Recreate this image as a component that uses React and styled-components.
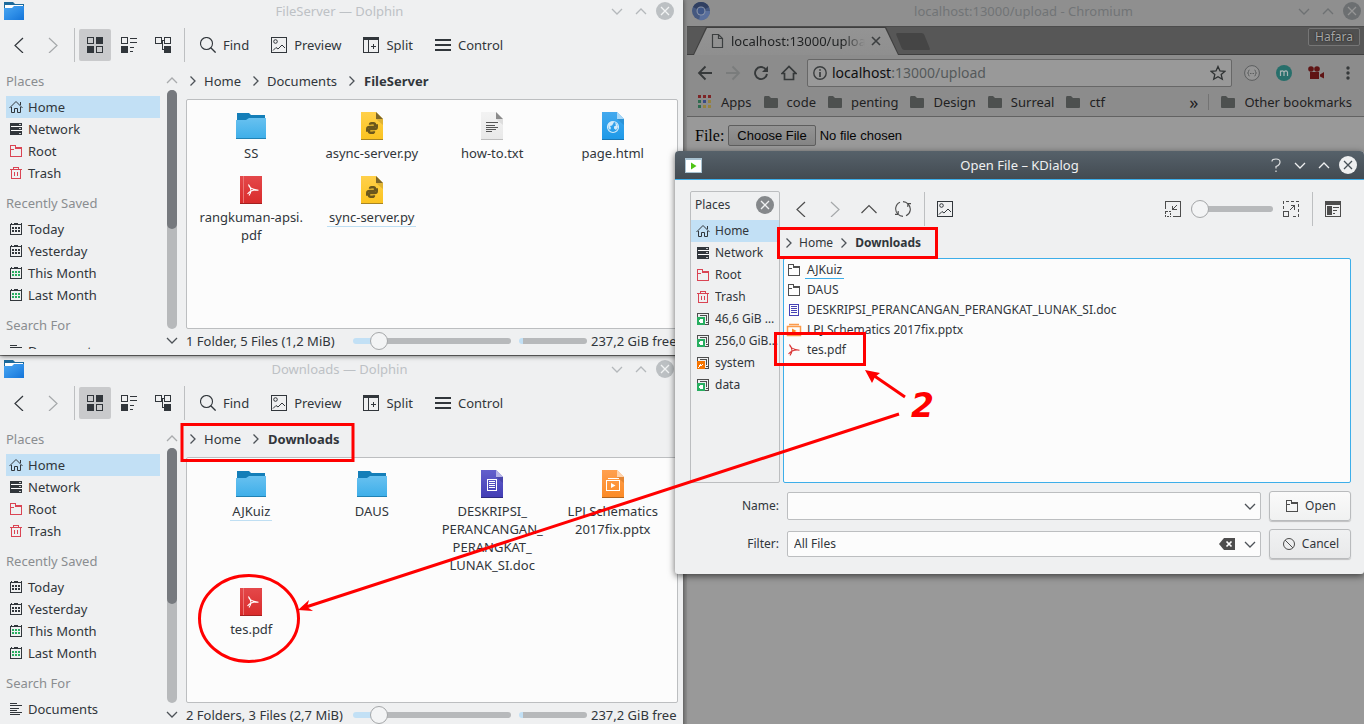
import React from "react";
import styled, { createGlobalStyle, css } from "styled-components";

const Global = createGlobalStyle`
  * { box-sizing: border-box; }
  html, body { margin: 0; height: 100%; }
  #root { height: 100%; }
  body { font: 13px/18px "Noto Sans", "Liberation Sans", sans-serif; color: #31363b; }
  button, input, select { font: inherit; color: inherit; }
  button { border: 0; background: none; padding: 0; }
  a { color: inherit; text-decoration: none; }
  ul { list-style: none; margin: 0; padding: 0; }
  svg { display: block; flex: none; }
`;

/* ---------- icons ---------- */
const Svg = ({ s = 16, children, ...p }) => (
  <svg width={s} height={s} viewBox={`0 0 ${s} ${s}`} fill="none" aria-hidden="true" {...p}>{children}</svg>
);

const chevrons = {
  left: "M12 1L4 8.500L12 16",
  right: "M4 1L12 8.500L4 16",
};
const Nav = ({ dir, color = "#31363b" }) => (
  <Svg><path d={chevrons[dir]} stroke={color} strokeWidth="1.2" /></Svg>
);
const Chevron = ({ dir = "down", color = "#4d5257" }) => {
  const d = { down: "M1 4L6 9L11 4", up: "M1 9L6 4L11 9", right: "M3.500 1.500L8 6L3.500 10.500" }[dir];
  return <Svg s={12}><path d={d} stroke={color} strokeWidth="1.3" /></Svg>;
};
const WideUp = () => <Svg><path d="M.5 12L8 4.500L15.500 12" stroke="#4d4d4d" strokeWidth="1.2" /></Svg>;
const CloseDisc = ({ bg, fg }) => (
  <Svg s={18}><circle cx="9" cy="9" r="9" fill={bg} /><path d="M5 5L13 13M13 5L5 13" stroke={fg} strokeWidth="1.3" /></Svg>
);

const GridIcon = () => (
  <Svg shapeRendering="crispEdges">
    <rect x=".5" y=".5" width="6" height="6" stroke="#31363b" /><rect x="9" width="7" height="7" fill="#31363b" />
    <rect y="9" width="7" height="7" fill="#31363b" /><rect x="9.500" y="9.500" width="6" height="6" stroke="#31363b" />
  </Svg>
);
const DetailsIcon = () => (
  <Svg shapeRendering="crispEdges">
    <rect x=".5" y=".5" width="6" height="6" stroke="#31363b" /><rect y="9" width="7" height="7" fill="#31363b" />
    <path d="M9 1.500H16M9 5.500H16M9 10.500H13M9 14.500H12" stroke="#31363b" />
  </Svg>
);
const TreeIcon = () => (
  <Svg shapeRendering="crispEdges">
    <rect x=".5" y=".5" width="6" height="6" stroke="#31363b" /><rect x="9.500" y=".5" width="6" height="6" stroke="#31363b" />
    <rect x="9" y="9" width="7" height="7" fill="#31363b" /><path d="M7 3.500H9M7.500 4V12.500H9" stroke="#31363b" />
  </Svg>
);
const FindIcon = () => (
  <Svg><circle cx="6.500" cy="6.500" r="6" stroke="#31363b" strokeWidth="1.1" /><path d="M10.800 10.800L15.600 15.600" stroke="#31363b" strokeWidth="1.3" /></Svg>
);
const PreviewIcon = () => (
  <Svg>
    <rect x=".5" y=".5" width="15" height="15" stroke="#31363b" /><circle cx="4.500" cy="4.500" r="1.800" stroke="#31363b" />
    <path d="M2 13.500L5 10.500L7 12L11 8L14 11" stroke="#31363b" />
  </Svg>
);
const SplitIcon = () => (
  <Svg shapeRendering="crispEdges">
    <rect x=".5" y=".5" width="15" height="15" stroke="#31363b" /><rect width="16" height="3" fill="#31363b" />
    <path d="M5.500 3V16M8 9.500H13M10.500 7V12" stroke="#31363b" />
  </Svg>
);
const MenuIcon = () => <Svg shapeRendering="crispEdges"><path d="M0 3H16M0 8H16M0 13H16" stroke="#31363b" strokeWidth="2" /></Svg>;
const RefreshIcon = () => (
  <Svg>
    <path d="M5 1.200A7.300 7.300 0 0 0 3 13.200M11 14.800A7.300 7.300 0 0 0 13 2.800M3.200 10V13.400H0M12.800 6V2.600H16M8 .6A7.300 7.300 0 0 1 13 2.800M8 15.400A7.300 7.300 0 0 1 3 13.200" stroke="#4d4d4d" strokeWidth="1.1" />
  </Svg>
);
const ZoomOutIcon = () => (
  <Svg shapeRendering="crispEdges">
    <path d="M.5 8V.5H15.500V15.500H8" stroke="#4d4d4d" /><path d="M.5 10.500H5.500V15.500H.5Z" stroke="#4d4d4d" strokeDasharray="2 1" />
    <path d="M12 4L8 8M7.500 4.500V8.500H11.500" stroke="#4d4d4d" />
  </Svg>
);
const ZoomInIcon = () => (
  <Svg shapeRendering="crispEdges">
    <path d="M.5 8V.5H15.500V15.500H8" stroke="#4d4d4d" strokeDasharray="3 2" /><rect x=".5" y="10.500" width="5" height="5" stroke="#4d4d4d" />
    <path d="M7 9L11 5M7.500 4.500H11.500V8.500" stroke="#4d4d4d" />
  </Svg>
);
const PanelIcon = () => (
  <Svg shapeRendering="crispEdges">
    <rect x=".5" y=".5" width="15" height="15" stroke="#4d4d4d" /><rect width="16" height="4" fill="#4d4d4d" />
    <rect x="2" y="5" width="5" height="9" fill="#4d4d4d" /><path d="M8 6.500H14M8 9.500H12M8 12.500H10" stroke="#4d4d4d" />
  </Svg>
);

const Calendar = ({ c }) => (
  <Svg shapeRendering="crispEdges">
    <path d="M2.500 3V13.500H13.500V3M2 3.500H14M3 2V4M13 2V4" stroke="#31363b" /><rect x="6" y="2" width="4" height="2" fill="#31363b" />
    <path d="M4 7H12M4 10H12" stroke={c} strokeWidth="2" strokeDasharray="2 1" />
  </Svg>
);
const Disk = ({ c, children }) => (
  <Svg shapeRendering="crispEdges">
    <rect x="2.500" y="2.500" width="11" height="11" stroke="#4d4d4d" /><path d="M5 4.500H11.500V10" stroke="#4d4d4d" />
    <path d="M7 6.500H10M11 11.500H13" stroke="#4d4d4d" />
    <rect x="2" y="6" width="8" height="8" fill={c} />{children}
  </Svg>
);
const Mounted = () => <Disk c="#27ae60"><path d="M3 10L6 7V8H8V12H6V13Z" fill="#fff" /></Disk>;
const FolderOutline = ({ c = "#4d4d4d" }) => (
  <Svg shapeRendering="crispEdges">
    <path d="M2.500 13.500V2.500H7.500V4.500H13.500V13.500ZM3 6.500H6" stroke={c} /><path d="M6 6L8 4H14V6Z" fill={c} />
  </Svg>
);
const placeIcons = {
  home: <Svg><path d="M1.500 9L8 2.500L14.500 9M3.500 8V13.500H6.500V9.500H9.500V13.500H12.500V8M12.500 3V6" stroke="#31363b" /></Svg>,
  network: (
    <Svg shapeRendering="crispEdges">
      <rect x="2" y="2" width="12" height="12" fill="#31363b" /><path d="M3 5.500H14M3 9.500H14" stroke="#fcfcfc" />
      <path d="M11 3.500H13M11 7.500H13M11 12.500H13" stroke="#c8cacc" />
    </Svg>
  ),
  root: <FolderOutline c="#da4453" />,
  trash: (
    <Svg shapeRendering="crispEdges"><path d="M2 4.500H14M3.500 5V13.500H12.500V5M5.500 4V2.500H10.500V4M6.500 7V11M9.500 7V11" stroke="#da4453" /></Svg>
  ),
  day: <Calendar c="#31363b" />,
  month: <Calendar c="#27ae60" />,
  docs: <Svg shapeRendering="crispEdges"><path d="M2 2.500H9M2 4.500H14M2 7.500H11M2 9.500H9M2 11.500H14M2 13.500H12" stroke="#31363b" /></Svg>,
  disk: <Mounted />,
  system: <Disk c="#f67400"><path d="M3 13L5 9L6 10L9 7L7 11L6 10.500Z" fill="#fff" /></Disk>,
};

const WindowFolder = () => (
  <Svg s={20}>
    <defs><linearGradient id="wf" x1="0" y1="0" x2="1" y2="1"><stop offset="0" stopColor="#4aa6f0" /><stop offset=".5" stopColor="#2f8fe8" /><stop offset="1" stopColor="#1474d8" /></linearGradient></defs>
    <path d="M0 1H9L11 3H20V7H0Z" fill="#1c6a9c" /><rect x="1" y="4" width="18" height="4" fill="#fff" />
    <path d="M0 7H8L10 5H20V19H0Z" fill="url(#wf)" />
  </Svg>
);

const Acrobat = ({ c }) => (
  <path d="M-4.500-5.500C-4-2-1-.5 5.500 .2C1-.5-3 1-5.500 4M-4.500-5.500C-1.500-2-1.500 2-4 5.500" stroke={c} strokeWidth="1.1" fill="none" />
);
const Paper = ({ id, from, to, fold, edge, children }) => (
  <Svg s={32}>
    <defs><linearGradient id={id} x2="0" y2="1"><stop stopColor={from} /><stop offset="1" stopColor={to} /></linearGradient></defs>
    <path d="M5 2H20L27 9V30H5Z" fill={`url(#${id})`} /><path d="M20 9H27V15Z" fill={edge} opacity=".35" />
    <path d="M20 2L27 9H20Z" fill={fold} /><path d="M5 29.500H27" stroke={edge} />
    {children}
  </Svg>
);
const fileIcons = {
  folder: (
    <Svg s={32}>
      <defs><linearGradient id="fo" x2="0" y2="1"><stop stopColor="#68c1f0" /><stop offset="1" stopColor="#3daee9" /></linearGradient></defs>
      <path d="M2 3H14L16 5H30V12H2Z" fill="#147eb8" /><path d="M1 10H11L14 8H31V29H1Z" fill="url(#fo)" /><path d="M1 28.500H31" stroke="#2182b4" />
    </Svg>
  ),
  python: (
    <Paper id="py" from="#ffd04a" to="#fbc31f" fold="#7d6628" edge="#a88523">
      <g transform="translate(10 12)" stroke="#6b571c" strokeWidth="2.400">
        <path d="M4 2.800Q4 1.200 5.500 1.200H7.500Q9 1.200 9 2.700V3.500Q9 5 7.500 5H3.500Q1.200 5 1.200 7V8.500H2.500" />
        <path d="M8 9.200Q8 10.800 6.500 10.800H4.500Q3 10.800 3 9.300V8.500Q3 7 4.500 7H8.500Q10.800 7 10.800 5V3.500H9.500" />
      </g>
    </Paper>
  ),
  text: (
    <Paper id="tx" from="#f3f3f3" to="#e8e8e8" fold="#8b8b8b" edge="#bdbdbd">
      <path d="M10 12.500H22M10 15.500H19M10 17.500H22M10 19.500H20M10 21.500H16" stroke="#555" shapeRendering="crispEdges" />
    </Paper>
  ),
  html: (
    <Paper id="ht" from="#43a9ee" to="#1d99e8" fold="#a9d8f7" edge="#1a76b3">
      <circle cx="16" cy="17" r="5.500" stroke="#d3ebfa" strokeWidth="1.2" />
      <path d="M11 14L14 11.500L17 12L16 14L15 15.500L13 16L14 18L13 20L11.500 18ZM18 13L20 14L21 17L19 20L17 18.500L17 16.500L19 15.500Z" fill="#d3ebfa" />
    </Paper>
  ),
  pdf: (
    <Svg s={32}>
      <defs><linearGradient id="pd" x2="0" y2="1"><stop stopColor="#e4484a" /><stop offset="1" stopColor="#d92b2b" /></linearGradient></defs>
      <rect x="5" y="2" width="22" height="28" fill="url(#pd)" /><path d="M8.500 2V30" stroke="#ec7373" /><path d="M5 29.500H27" stroke="#a32020" />
      <g transform="translate(18 16)"><Acrobat c="#fff" /></g>
    </Svg>
  ),
  doc: (
    <Paper id="dc" from="#6360cc" to="#413cb4" fold="#b5b3e6" edge="#2d2a80">
      <path d="M11.500 11.500H20.500V22.500H11.500Z M13 13.500H19M13 15.500H19M13 17.500H19M13 19.500H19" stroke="#fff" shapeRendering="crispEdges" />
    </Paper>
  ),
  pptx: (
    <Paper id="pp" from="#ffa04f" to="#fb8a25" fold="#ffd3ad" edge="#b3641c">
      <path d="M9.500 12.500H22.500V22.500H9.500ZM10.500 10.500H21.500" stroke="#fff" shapeRendering="crispEdges" /><path d="M14 15L18.500 17.500L14 20Z" fill="#fff" />
    </Paper>
  ),
};

/* ---------- desktop and windows ---------- */
const Desktop = styled.main`
  position: relative;
  width: 100%;
  height: 100%;
  min-height: 724px;
  overflow: hidden;
  background: #979797;
`;
const Dolphin = styled.section`
  position: absolute;
  left: 0;
  top: ${(p) => p.$top}px;
  width: 683px;
  height: ${(p) => p.$height}px;
  z-index: ${(p) => p.$z};
  display: flex;
  flex-direction: column;
  background: #eff0f1;
  box-shadow: 0 1px 5px rgba(0, 0, 0, 0.6);
`;
const TitleBar = styled.header`
  display: grid;
  grid-template-columns: 72px 1fr 76px;
  align-items: center;
  height: 26px;
  color: #bdc1c5;
  text-align: center;
  > svg { margin-left: 4px; }
`;
const WindowButtons = styled.div`
  display: flex;
  justify-content: flex-end;
  align-items: center;
  padding-right: ${(p) => p.$right}px;
  gap: 6px;
  button { width: 18px; display: grid; place-items: center; }
`;
const ToolBar = styled.div`
  display: flex;
  align-items: center;
  gap: 2px;
  height: 42px;
  padding-left: 3px;
`;
const ToolButton = styled.button`
  display: flex;
  align-items: center;
  justify-content: center;
  gap: 7px;
  height: 32px;
  border-radius: 2px;
  ${(p) => (p.$text ? "padding: 0 9px 0 11px;" : "width: 32px;")}
  ${(p) => p.$on && "background: #c9cacc;"}
`;
const Separator = styled.span`
  width: 1px;
  height: 34px;
  margin: 0 2px 0 3px;
  background: #bdbfc1;
`;
const Body = styled.div`
  flex: 1;
  min-height: 0;
  display: flex;
`;
const Sidebar = styled.nav`
  width: 160px;
  margin-bottom: 6px;
  padding-left: 6px;
  overflow: hidden;
`;
const PlaceGroup = styled.section`
  padding-bottom: 4px;
`;
const PlaceHeading = styled.h2`
  margin: 0;
  padding: 4px 0;
  font-size: 13px;
  font-weight: 400;
  line-height: 22px;
  color: #8a8d90;
`;
const PlaceButton = styled.button`
  display: flex;
  align-items: center;
  gap: 4px;
  width: 100%;
  height: 22px;
  padding-left: ${(p) => p.$inset || 2}px;
  text-align: left;
  white-space: nowrap;
  ${(p) => p.$on && "background: #c2e0f5;"}
`;
const ScrollColumn = styled.div`
  display: flex;
  flex-direction: column;
  align-items: center;
  width: 12px;
  margin: 0 8px 0 6px;
  button { height: 24px; display: grid; place-items: center; padding-top: 4px; }
  button:last-child { height: 26px; padding: 0 0 4px; }
`;
const Track = styled.div`
  flex: 1;
  width: 10px;
  border-radius: 5px;
  background: #b7b9bb;
  &::before {
    content: "";
    display: block;
    height: ${(p) => p.$size}%;
    border-radius: 5px;
    background: #76797e;
  }
`;
const Main = styled.div`
  flex: 1;
  min-width: 0;
  margin-right: 5px;
  display: flex;
  flex-direction: column;
`;
const Crumbs = styled.nav`
  display: flex;
  align-items: center;
  gap: 5px;
  height: 33px;
  padding: 0 0 4px 1px;
  a { padding-right: 4px; }
  strong { padding-left: 1px; }
`;
const DialogCrumbs = styled(Crumbs)`
  gap: 4px;
  height: 32px;
  padding: 1px 0 0;
  a { padding-right: 1px; }
`;
const Files = styled.ul`
  && {
    flex: 1;
    display: grid;
    grid-template-columns: repeat(4, 1fr);
    align-content: start;
    row-gap: 12px;
    padding: 10px 4px;
  }
  border: 1px solid #bcbec0;
  border-radius: 2px;
  background: #fcfcfc;
`;
const FileItem = styled.li`
  display: flex;
  flex-direction: column;
  align-items: center;
  gap: 2px;
  text-align: center;
  white-space: pre-line;
  span { padding: 0 2px; ${(p) => p.$marked && "box-shadow: 0 1px #bfdff3;"} }
`;
const StatusBar = styled.footer`
  display: flex;
  align-items: center;
  height: 26px;
  padding-bottom: 2px;
  white-space: nowrap;
  output { flex: 1; }
`;
const Slider = styled.input`
  appearance: none;
  width: ${(p) => p.$w}px;
  height: 20px;
  margin: 0;
  background: none;
  &::-webkit-slider-runnable-track {
    height: 6px;
    border-radius: 3px;
    background: linear-gradient(90deg, #c2e0f5 ${(p) => p.$fill}px, #b7b9bb ${(p) => p.$fill}px);
  }
  &::-webkit-slider-thumb {
    appearance: none;
    width: 18px;
    height: 18px;
    margin-top: -6px;
    border: 1px solid #a5a7a9;
    border-radius: 50%;
    background: #f3f4f5;
  }
`;
const Capacity = styled.div`
  width: 68px;
  height: 6px;
  margin: 0 4px 0 8px;
  border-radius: 3px;
  background: linear-gradient(90deg, #c2e0f5 4px, #b7b9bb 4px);
`;
const FreeSpace = styled.span`
  width: 87px;
`;

const groups = [
  ["Places", [["Home", "home"], ["Network", "network"], ["Root", "root"], ["Trash", "trash"]]],
  ["Recently Saved", [["Today", "day"], ["Yesterday", "day"], ["This Month", "month"], ["Last Month", "month"]]],
  ["Search For", [["Documents", "docs"]]],
];

function DolphinWindow({ title, path, files, status, thumb, ...pos }) {
  const last = path.length - 1;
  return (
    <Dolphin {...pos}>
      <TitleBar>
        <WindowFolder />
        <span>{title} — Dolphin</span>
        <WindowButtons $right={9}>
          <button aria-label="Minimize"><Chevron color="#b4b8bb" /></button>
          <button aria-label="Maximize"><Chevron dir="up" color="#b4b8bb" /></button>
          <button aria-label="Close"><CloseDisc bg="#bcc0c3" fg="#f2f3f4" /></button>
        </WindowButtons>
      </TitleBar>
      <ToolBar>
        <ToolButton aria-label="Back"><Nav dir="left" /></ToolButton>
        <ToolButton aria-label="Forward"><Nav dir="right" color="#a5a8aa" /></ToolButton>
        <Separator />
        <ToolButton $on aria-label="Icons view"><GridIcon /></ToolButton>
        <ToolButton aria-label="Compact view"><DetailsIcon /></ToolButton>
        <ToolButton aria-label="Details view"><TreeIcon /></ToolButton>
        <Separator />
        <ToolButton $text><FindIcon />Find</ToolButton>
        <ToolButton $text><PreviewIcon />Preview</ToolButton>
        <ToolButton $text><SplitIcon />Split</ToolButton>
        <ToolButton $text><MenuIcon />Control</ToolButton>
      </ToolBar>
      <Body>
        <Sidebar>
          {groups.map(([name, items]) => (
            <PlaceGroup key={name}>
              <PlaceHeading>{name}</PlaceHeading>
              {items.map(([label, icon]) => (
                <PlaceButton key={label} $on={label === "Home"}>{placeIcons[icon]}{label}</PlaceButton>
              ))}
            </PlaceGroup>
          ))}
        </Sidebar>
        <ScrollColumn>
          <button aria-label="Scroll up"><Chevron dir="up" color="#a9abad" /></button>
          <Track $size={thumb} />
          <button aria-label="Scroll down"><Chevron /></button>
        </ScrollColumn>
        <Main>
          <Crumbs>
            {path.map((p, i) => (
              <React.Fragment key={p}>
                <Chevron dir="right" />
                {i === last ? <strong>{p}</strong> : <a href="#folder">{p}</a>}
              </React.Fragment>
            ))}
          </Crumbs>
          <Files>
            {files.map(([name, icon, marked]) => (
              <FileItem key={name} $marked={marked}>{fileIcons[icon]}<span>{name}</span></FileItem>
            ))}
          </Files>
          <StatusBar>
            <output>{status}</output>
            <Slider type="range" aria-label="Icon size" defaultValue="12" $w={158} $fill={26} />
            <Capacity />
            <FreeSpace>237,2 GiB free</FreeSpace>
          </StatusBar>
        </Main>
      </Body>
    </Dolphin>
  );
}

/* ---------- browser ---------- */
const Browser = styled.section`
  position: absolute;
  inset: 0 0 0 683px;
  display: flex;
  flex-direction: column;
  padding-left: 4px;
  background: #8f8f8f;
  color: #1f2122;
`;
const BrowserTitle = styled(TitleBar)`
  grid-template-columns: 76px 1fr 80px;
  padding-bottom: 4px;
  color: #717476;
`;
const TabStrip = styled.div`
  display: flex;
  align-items: flex-start;
  height: 29px;
  padding-left: 6px;
  border-top: 1px solid #4c4c4c;
  border-bottom: 1px solid #3f3f3f;
  background: #575757;
`;
const Tab = styled.div`
  position: relative;
  display: flex;
  align-items: center;
  width: 206px;
  height: 28px;
  padding-left: 16px;
  gap: 6px;
  background: #3f3f3f;
  clip-path: polygon(13px 0, 193px 0, 100% 100%, 0 100%);
  &::before {
    content: "";
    position: absolute;
    inset: 1px 0 0;
    background: linear-gradient(#949494, #8f8f8f);
    clip-path: polygon(14px 0, 192px 0, 205px 100%, 1px 100%);
  }
  > * { position: relative; }
  span {
    width: 134px;
    overflow: hidden;
    white-space: nowrap;
    mask-image: linear-gradient(90deg, #000 112px, transparent 134px);
  }
`;
const NewTab = styled.button`
  width: 28px;
  height: 17px;
  margin: 6px 0 0;
  border-radius: 2px;
  background: #454545;
  transform: skewX(22deg);
`;
const Profile = styled.button`
  width: 52px;
  height: 18px;
  margin: 1px 4px 0 auto;
  border: 1px solid #767676;
  border-radius: 2px;
  background: #505050;
  color: #a6a6a6;
  font-size: 12px;
  line-height: 14px;
  text-shadow: 0 0 2px #111;
`;
const AddressRow = styled.div`
  display: flex;
  align-items: center;
  height: 36px;
  padding: 0 8px 0 10px;
  gap: 12px;
  background: #8c8c8c;
`;
const NavGroup = styled.div`
  display: flex;
  gap: 12px;
`;
const AddressBox = styled.div`
  flex: 1;
  display: flex;
  align-items: center;
  gap: 5px;
  height: 28px;
  margin-left: -2px;
  padding: 0 5px;
  border: 1px solid #676767;
  border-radius: 2px;
  background: #999;
`;
const Address = styled.div`
  flex: 1;
  color: #55595b;
  font-size: 14px;
  b { font-weight: 400; color: #0e0f10; }
`;
const Extensions = styled.div`
  display: flex;
  align-items: center;
  gap: 16px;
`;
const Bookmarks = styled.nav`
  display: flex;
  align-items: center;
  gap: 12px;
  height: 26px;
  padding: 0 12px 4px 11px;
  border-bottom: 1px solid #626262;
  background: #8c8c8c;
  a { display: flex; align-items: center; gap: 9px; white-space: nowrap; }
`;
const More = styled.button`
  margin-left: auto;
  font-size: 18px;
`;
const BookmarkRule = styled.span`
  width: 1px;
  height: 16px;
  margin-left: -2px;
  background: #737373;
`;
const Page = styled.form`
  flex: 1;
  padding: 8px;
  background: #999;
  color: #050505;
  font-family: "Liberation Serif", serif;
  font-size: 16px;
  label { display: flex; align-items: center; gap: 4px; }
`;
const FileInput = styled.input`
  font: 13px/16px "Liberation Sans", sans-serif;
  &::file-selector-button {
    height: 21px;
    padding: 0 8px;
    margin-right: 4px;
    border: 1px solid #5e5e5e;
    border-radius: 2px;
    background: linear-gradient(#949494, #848484);
    color: #050505;
    font: inherit;
  }
`;

const FolderSolid = () => (
  <Svg s={14}><path d="M0 3Q0 1 1 1H5L7 3H13Q14 3 14 4V12Q14 13 13 13H1Q0 13 0 12Z" fill="#4d504f" /></Svg>
);
const appColors = ["#7d2426", "#7d2426", "#7d2426", "#2f6b4f", "#3a4a86", "#96823f", "#2f6b4f", "#96823f", "#96823f"];

function BrowserWindow() {
  return (
    <Browser>
      <BrowserTitle>
        <Svg s={20}>
          <circle cx="10" cy="10" r="9" fill="#45587f" /><path d="M10 10L2 6A9 9 0 0 1 18 6Z" fill="#303f61" />
          <path d="M10 10H19A9 9 0 0 1 8 19Z" fill="#5a6f9c" />
          <circle cx="10" cy="10" r="4.500" fill="#8a94a8" /><circle cx="10" cy="10" r="3.400" fill="#3f5687" />
        </Svg>
        <span>localhost:13000/upload - Chromium</span>
        <WindowButtons $right={3}>
          <button aria-label="Minimize"><Chevron color="#6e7173" /></button>
          <button aria-label="Maximize"><Chevron dir="up" color="#6e7173" /></button>
          <button aria-label="Close"><CloseDisc bg="#6c6f71" fg="#959595" /></button>
        </WindowButtons>
      </BrowserTitle>
      <TabStrip>
        <Tab>
          <Svg><path d="M3.500 1.500H9.500L13.500 5.500V14.500H3.500ZM9.500 1.500V5.500H13.500" stroke="#3c3f40" strokeWidth="1.2" /></Svg>
          <span>localhost:13000/upload</span>
          <button aria-label="Close tab"><Svg s={10}><path d="M1 1L9 9M9 1L1 9" stroke="#3c3f40" strokeWidth="1.6" /></Svg></button>
        </Tab>
        <NewTab aria-label="New tab" />
        <Profile>Hafara</Profile>
      </TabStrip>
      <AddressRow>
        <NavGroup>
          <button aria-label="Back"><Svg><path d="M8.500 1.500L2 8L8.500 14.500M2 8H15" stroke="#36393a" strokeWidth="1.8" /></Svg></button>
          <button aria-label="Forward"><Svg><path d="M7.500 1.500L14 8L7.500 14.500M14 8H1" stroke="#7a7c7c" strokeWidth="1.8" /></Svg></button>
          <button aria-label="Reload"><Svg><path d="M12.500 4A6 6 0 1 0 14 9" stroke="#36393a" strokeWidth="1.900" /><path d="M15 1V7H9Z" fill="#36393a" /></Svg></button>
          <button aria-label="Home page"><Svg><path d="M1 8.500L8 1.500L15 8.500H12.500V14.500H3.500V8.500Z" stroke="#36393a" strokeWidth="1.7" /></Svg></button>
        </NavGroup>
        <AddressBox>
          <Svg s={14}><circle cx="7" cy="7" r="6.200" stroke="#3a3d3e" strokeWidth="1.400" /><path d="M7 6V11M7 3.200V4.800" stroke="#3a3d3e" strokeWidth="1.700" /></Svg>
          <Address><b>localhost</b>:13000/upload</Address>
          <Svg><path d="M8 1.500L10 6L14.800 6.400L11.200 9.600L12.300 14.300L8 11.800L3.700 14.300L4.800 9.600L1.200 6.400L6 6Z" stroke="#2f3233" strokeWidth="1.300" /></Svg>
        </AddressBox>
        <Extensions>
          <Svg><circle cx="8" cy="8" r="7.400" fill="#959595" stroke="#5c5e5f" /><path d="M5.500 5Q4.500 5 4.500 6.500T3.500 8Q4.500 8 4.500 9.500T5.500 11M10.500 5Q11.500 5 11.500 6.500T12.500 8Q11.500 8 11.500 9.500T10.500 11" stroke="#5c5e5f" /><path d="M6 8.500H10" stroke="#5c5e5f" strokeDasharray="1 .500" /></Svg>
          <Svg><circle cx="8" cy="8" r="8" fill="#276f6b" /><path d="M4.500 11V5.500M4.500 7Q6.200 4.600 8 7V11M8 7Q10 4.600 11.500 7V11" stroke="#a8b4b4" strokeWidth="1.200" /></Svg>
          <Svg><circle cx="3" cy="4" r="2.800" fill="#5f1414" /><circle cx="9" cy="4" r="2.800" fill="#5f1414" /><path d="M2 7H11V14H2ZM12 9.500L16 7V13.500L12 11.500Z" fill="#5f1414" /></Svg>
          <Svg><circle cx="8" cy="3" r="1.700" fill="#36393a" /><circle cx="8" cy="8" r="1.700" fill="#36393a" /><circle cx="8" cy="13" r="1.700" fill="#36393a" /></Svg>
        </Extensions>
      </AddressRow>
      <Bookmarks>
        <a href="#apps">
          <Svg s={14}>{appColors.map((c, i) => <rect key={i} x={(i % 3) * 5} y={Math.floor(i / 3) * 5} width="3" height="3" fill={c} />)}</Svg>
          Apps
        </a>
        {["code", "penting", "Design", "Surreal", "ctf"].map((b) => <a key={b} href="#bookmark"><FolderSolid />{b}</a>)}
        <More aria-label="More bookmarks">»</More>
        <BookmarkRule />
        <a href="#other"><FolderSolid />Other bookmarks</a>
      </Bookmarks>
      <Page>
        <label>File: <FileInput type="file" /></label>
      </Page>
    </Browser>
  );
}

/* ---------- open file dialog ---------- */
const Dialog = styled.section`
  position: absolute;
  z-index: 4;
  left: 675px;
  right: 0;
  top: 151px;
  height: 423px;
  display: flex;
  flex-direction: column;
  border-radius: 4px 4px 3px 3px;
  background: #eff0f1;
  box-shadow: 0 2px 7px rgba(0, 0, 0, 0.6);
  font-size: 12px;
`;
const DialogTitle = styled(TitleBar)`
  grid-template-columns: 104px 1fr 104px;
  height: 29px;
  border-bottom: 1px solid #3daee9;
  border-radius: 4px 4px 0 0;
  background: linear-gradient(#56616a, #434b52);
  color: #eff0f1;
  font-size: 13px;
  > svg { margin-left: 8px; }
`;
const DialogBody = styled.div`
  flex: 1;
  display: flex;
  gap: 3px;
  padding: 0 13px 8px 15px;
`;
const PlacesPanel = styled.nav`
  width: 90px;
  margin-top: 11px;
  border: 1px solid #bcbec0;
  border-radius: 2px;
  overflow: hidden;
`;
const PanelHeader = styled.h2`
  display: flex;
  align-items: center;
  justify-content: space-between;
  height: 28px;
  margin: 0;
  padding: 0 5px 3px 4px;
  font-size: 12px;
  font-weight: 400;
`;
const Ellipsis = styled.span`
  width: 64px;
  overflow: hidden;
  text-overflow: ellipsis;
`;
const DialogMain = styled(Main)`
  margin: 0;
`;
const DialogTools = styled.div`
  display: flex;
  align-items: center;
  gap: 2px;
  height: 46px;
  padding: 12px 2px 0 2px;
`;
const Spring = styled.span`
  flex: 1;
`;
const FileList = styled.ul`
  && { padding-top: 1px; }
  flex: 1;
  border: 1px solid #3daee9;
  border-radius: 2px;
  background: #fcfcfc;
  li { display: flex; align-items: center; gap: 3px; height: 20px; margin-left: 2px; }
  span { padding: 0 2px; line-height: 16px; }
`;
const Marked = styled.span`
  border-bottom: 1px solid #3daee9;
`;
const DialogForm = styled.form`
  display: grid;
  grid-template-columns: 89px 1fr 82px;
  gap: 8px;
  align-items: center;
  padding: 0 13px 15px 15px;
  > label { text-align: right; }
`;
const Field = styled.div`
  position: relative;
  display: flex;
  align-items: center;
  input, select {
    appearance: none;
    width: 100%;
    height: ${(p) => p.$height}px;
    padding: 0 6px;
    border: 1px solid #bcbec0;
    border-radius: 2px;
    outline: 0;
    background: #fcfcfc;
  }
`;
const FieldIcons = styled.span`
  position: absolute;
  right: 5px;
  display: flex;
  align-items: center;
  gap: 9px;
  pointer-events: none;
`;
const PushButton = styled.button`
  display: flex;
  align-items: center;
  justify-content: center;
  gap: 5px;
  height: 30px;
  && {
    border: 1px solid #b9bbbd;
    border-radius: 3px;
    background: linear-gradient(#fafafa, #f0f1f1);
    box-shadow: 0 1px 1px rgba(0, 0, 0, 0.2);
    ${(p) => p.$flat && css`background: linear-gradient(#f0f1f2, #e8e9ea);`}
  }
`;

const dialogPlaces = [
  ["Home", "home"], ["Network", "network"], ["Root", "root"], ["Trash", "trash"],
  ["46,6 GiB Hard Drive", "disk"], ["256,0 GiB Hard Drive", "disk"], ["system", "system"], ["data", "disk"],
];
const listIcons = {
  folder: <FolderOutline />,
  doc: <Svg shapeRendering="crispEdges"><path d="M3.500 2.500H12.500V13.500H3.500ZM5 4.500H11M5 6.500H11M5 8.500H11M5 10.500H11" stroke="#4540b5" /></Svg>,
  pptx: <Svg><path d="M1.500 4.500H14.500V13.500H1.500ZM3 2.500H13" stroke="#fb9a4b" strokeWidth="1.500" /><path d="M6 6.500L10.500 9L6 11.500Z" fill="#fb8a25" /></Svg>,
  pdf: <Svg><g transform="translate(8 8)"><Acrobat c="#da3434" /></g></Svg>,
};

function OpenDialog() {
  return (
    <Dialog role="dialog" aria-label="Open File">
      <DialogTitle>
        <Svg s={20}><rect x="2" y="3" width="17" height="15" fill="#a9c3d2" /><rect x="3" y="5" width="15" height="12" fill="#fff" /><path d="M8 7.500L13.500 11L8 14.500Z" fill="#4fc414" /></Svg>
        <span>Open File – KDialog</span>
        <WindowButtons $right={7}>
          <button aria-label="Help"><Svg><path d="M4 4.500Q4 2 8 2T12 5T8 9.500V11.500M8 13.500V15" stroke="#dfe1e2" strokeWidth="1.200" /></Svg></button>
          <button aria-label="Minimize"><Chevron color="#eff0f1" /></button>
          <button aria-label="Maximize"><Chevron dir="up" color="#eff0f1" /></button>
          <button aria-label="Close"><CloseDisc bg="#eff0f1" fg="#475057" /></button>
        </WindowButtons>
      </DialogTitle>
      <DialogBody>
        <PlacesPanel>
          <PanelHeader>Places <button aria-label="Close panel"><CloseDisc bg="#85888b" fg="#eff0f1" /></button></PanelHeader>
          {dialogPlaces.map(([label, icon]) => (
            <PlaceButton key={label} $inset={4} $on={label === "Home"}>{placeIcons[icon]}<Ellipsis>{label}</Ellipsis></PlaceButton>
          ))}
        </PlacesPanel>
        <DialogMain>
          <DialogTools>
            <ToolButton aria-label="Back"><Nav dir="left" color="#4d4d4d" /></ToolButton>
            <ToolButton aria-label="Forward"><Nav dir="right" color="#a5a8aa" /></ToolButton>
            <ToolButton aria-label="Parent folder"><WideUp /></ToolButton>
            <ToolButton aria-label="Reload"><RefreshIcon /></ToolButton>
            <Separator />
            <ToolButton aria-label="Preview"><PreviewIcon /></ToolButton>
            <Spring />
            <ToolButton aria-label="Smaller icons"><ZoomOutIcon /></ToolButton>
            <Slider type="range" aria-label="Icon size" defaultValue="0" $w={82} $fill={0} />
            <ToolButton aria-label="Larger icons"><ZoomInIcon /></ToolButton>
            <Separator />
            <ToolButton aria-label="Options"><PanelIcon /></ToolButton>
          </DialogTools>
          <DialogCrumbs>
            <Chevron dir="right" /><a href="#home">Home</a><Chevron dir="right" /><strong>Downloads</strong>
          </DialogCrumbs>
          <FileList>
            <li>{listIcons.folder}<Marked>AJKuiz</Marked></li>
            <li>{listIcons.folder}<span>DAUS</span></li>
            <li>{listIcons.doc}<span>DESKRIPSI_PERANCANGAN_PERANGKAT_LUNAK_SI.doc</span></li>
            <li>{listIcons.pptx}<span>LPJ Schematics 2017fix.pptx</span></li>
            <li>{listIcons.pdf}<span>tes.pdf</span></li>
          </FileList>
        </DialogMain>
      </DialogBody>
      <DialogForm>
        <label htmlFor="name">Name:</label>
        <Field $height={28}><input id="name" type="text" /><FieldIcons><Chevron /></FieldIcons></Field>
        <PushButton type="button"><FolderOutline />Open</PushButton>
        <label htmlFor="filter">Filter:</label>
        <Field $height={26}>
          <select id="filter"><option>All Files</option></select>
          <FieldIcons>
            <Svg><path d="M0 8L5 2H16V14H5Z" fill="#4d4d4d" /><path d="M7.500 5.500L12.500 10.500M12.500 5.500L7.500 10.500" stroke="#fff" strokeWidth="1.700" /></Svg>
            <Chevron />
          </FieldIcons>
        </Field>
        <PushButton type="button" $flat>
          <Svg><circle cx="8" cy="8" r="5.500" stroke="#4d4d4d" /><path d="M4 4L12 12" stroke="#4d4d4d" /></Svg>Cancel
        </PushButton>
      </DialogForm>
    </Dialog>
  );
}

/* ---------- red annotations drawn over the windows ---------- */
const Marks = styled.svg`
  position: absolute;
  left: 0;
  top: 0;
  z-index: 5;
  pointer-events: none;
`;
const Step = styled.strong`
  position: absolute;
  z-index: 5;
  left: 911px;
  top: 387px;
  color: #f00;
  font: italic bold 33px/38px "DejaVu Sans", sans-serif;
`;

export default function App() {
  return (
    <>
      <Global />
      <Desktop>
        <BrowserWindow />
        <DolphinWindow
          $top={-2} $height={357} $z={3}
          title="FileServer" path={["Home", "Documents", "FileServer"]}
          status="1 Folder, 5 Files (1,2 MiB)" thumb={58}
          files={[
            ["SS", "folder"], ["async-server.py", "python"], ["how-to.txt", "text"], ["page.html", "html"],
            ["rangkuman-apsi.\npdf", "pdf"], ["sync-server.py", "python", true],
          ]}
        />
        <DolphinWindow
          $top={356} $height={373} $z={2}
          title="Downloads" path={["Home", "Downloads"]}
          status="2 Folders, 3 Files (2,7 MiB)" thumb={61}
          files={[
            ["AJKuiz", "folder", true], ["DAUS", "folder"],
            ["DESKRIPSI_\nPERANCANGAN_\nPERANGKAT_\nLUNAK_SI.doc", "doc"],
            ["LPJ Schematics\n2017fix.pptx", "pptx"], ["tes.pdf", "pdf"],
          ]}
        />
        <OpenDialog />
        <Marks width="1000" height="700" fill="none" stroke="#f00" strokeWidth="3" aria-hidden="true">
          <rect x="182" y="424.500" width="171" height="36" />
          <rect x="778.500" y="228.500" width="158" height="29" />
          <rect x="775.500" y="333.500" width="89" height="31" />
          <ellipse cx="249" cy="618.500" rx="49.500" ry="43" />
          <path d="M899 414L306 607M905 397L873 375" />
          <path d="M298 610L309 600L307 607L313 611ZM865 370L880 373L875 377L872 383Z" fill="#f00" stroke="none" />
        </Marks>
        <Step>2</Step>
      </Desktop>
    </>
  );
}
